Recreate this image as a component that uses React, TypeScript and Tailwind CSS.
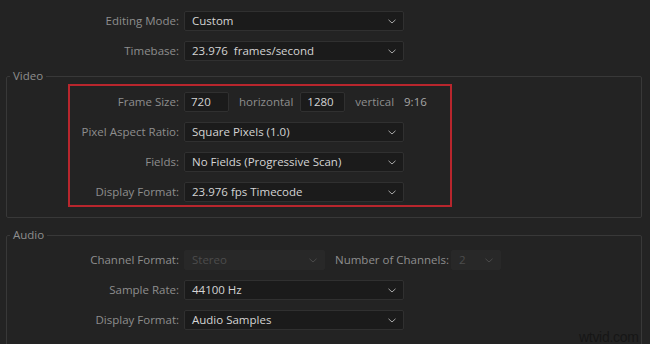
import React from "react";

function Chevron({ dim }: { dim?: boolean }) {
    return (
        <svg width="8" height="5" viewBox="0 0 8 5" className="shrink-0">
            <path d="M0.5 0.8 L4 4 L7.5 0.8" fill="none" stroke={dim ? "#4a4a4a" : "#a8a8a8"} strokeWidth="1" />
        </svg>
    );
}

function Select({ value, width, dim }: { value: string, width: string, dim?: boolean }) {
    const boxClass = dim
        ? "bg-[#282828] border-[#282828] text-[#4c4c4c]"
        : "bg-[#1b1b1b] border-[#303030] text-[#d4d4d4]";
    return (
        <div className={"h-[20px] flex items-center justify-between pl-[7px] pr-[7px] border rounded-[2px] " + boxClass + " " + width}>
            <span className="leading-none whitespace-pre">{value}</span>
            <Chevron dim={dim} />
        </div>
    );
}

function Row({ label, labelWidth, children }: { label: string, labelWidth: string, children: React.ReactNode }) {
    return (
        <div className="flex items-center h-[20px]">
            <div className={"text-right text-[#8e8e8e] pr-[5px] " + labelWidth}>{label}</div>
            {children}
        </div>
    );
}

function NumBox({ value }: { value: string }) {
    return (
        <div className="h-[20px] w-[45px] flex items-center pl-[6px] bg-[#1b1b1b] border border-[#303030] rounded-[2px] text-[#d4d4d4]">
            {value}
        </div>
    );
}

export default function App() {
    return (
        <div className="relative w-[650px] h-[344px] overflow-hidden bg-[#232323] text-[11.5px] font-['Open_Sans',sans-serif]">
            <div className="flex flex-col gap-[10px] pt-[11px]">
                <Row label="Editing Mode:" labelWidth="w-[184px]">
                    <Select value="Custom" width="w-[220px]" />
                </Row>
                <Row label="Timebase:" labelWidth="w-[184px]">
                    <Select value="23.976  frames/second" width="w-[220px]" />
                </Row>
            </div>

            <fieldset className="mt-[7px] ml-[6px] w-[636px] border border-[#383838] rounded-[2px] pb-[10px]">
                <legend className="ml-[3px] px-[3px] leading-[16px] text-[#8e8e8e]">Video</legend>
                <div className="ml-[61px] w-[384px] border-2 border-[#b8262d] pt-[6px] pb-[3px] flex flex-col gap-[10px]">
                    <Row label="Frame Size:" labelWidth="w-[114px]">
                        <NumBox value="720" />
                        <span className="ml-[10px] mr-[7px] text-[#8e8e8e]">horizontal</span>
                        <NumBox value="1280" />
                        <span className="ml-[10px] text-[#8e8e8e]">vertical</span>
                        <span className="ml-[10px] text-[#a6a6a6]">9:16</span>
                    </Row>
                    <Row label="Pixel Aspect Ratio:" labelWidth="w-[114px]">
                        <Select value="Square Pixels (1.0)" width="w-[220px]" />
                    </Row>
                    <Row label="Fields:" labelWidth="w-[114px]">
                        <Select value="No Fields (Progressive Scan)" width="w-[220px]" />
                    </Row>
                    <Row label="Display Format:" labelWidth="w-[114px]">
                        <Select value="23.976 fps Timecode" width="w-[220px]" />
                    </Row>
                </div>
            </fieldset>

            <fieldset className="mt-[9px] ml-[6px] w-[636px] border border-[#383838] rounded-[2px] pb-[20px]">
                <legend className="ml-[3px] px-[3px] leading-[16px] text-[#8e8e8e]">Audio</legend>
                <div className="pt-[7px] flex flex-col gap-[10px]">
                    <Row label="Channel Format:" labelWidth="w-[177px]">
                        <Select value="Stereo" width="w-[141px]" dim />
                        <span className="ml-[10px] mr-[2px] text-[#8e8e8e]">Number of Channels:</span>
                        <Select value="2" width="w-[50px]" dim />
                    </Row>
                    <Row label="Sample Rate:" labelWidth="w-[177px]">
                        <Select value="44100 Hz" width="w-[220px]" />
                    </Row>
                    <Row label="Display Format:" labelWidth="w-[177px]">
                        <Select value="Audio Samples" width="w-[220px]" />
                    </Row>
                </div>
            </fieldset>

            <div className="absolute left-[579px] top-[327px] text-[14px] text-[#161616] font-['Liberation_Sans',sans-serif] tracking-[-0.3px]">wtvid.com</div>
        </div>
    );
}
